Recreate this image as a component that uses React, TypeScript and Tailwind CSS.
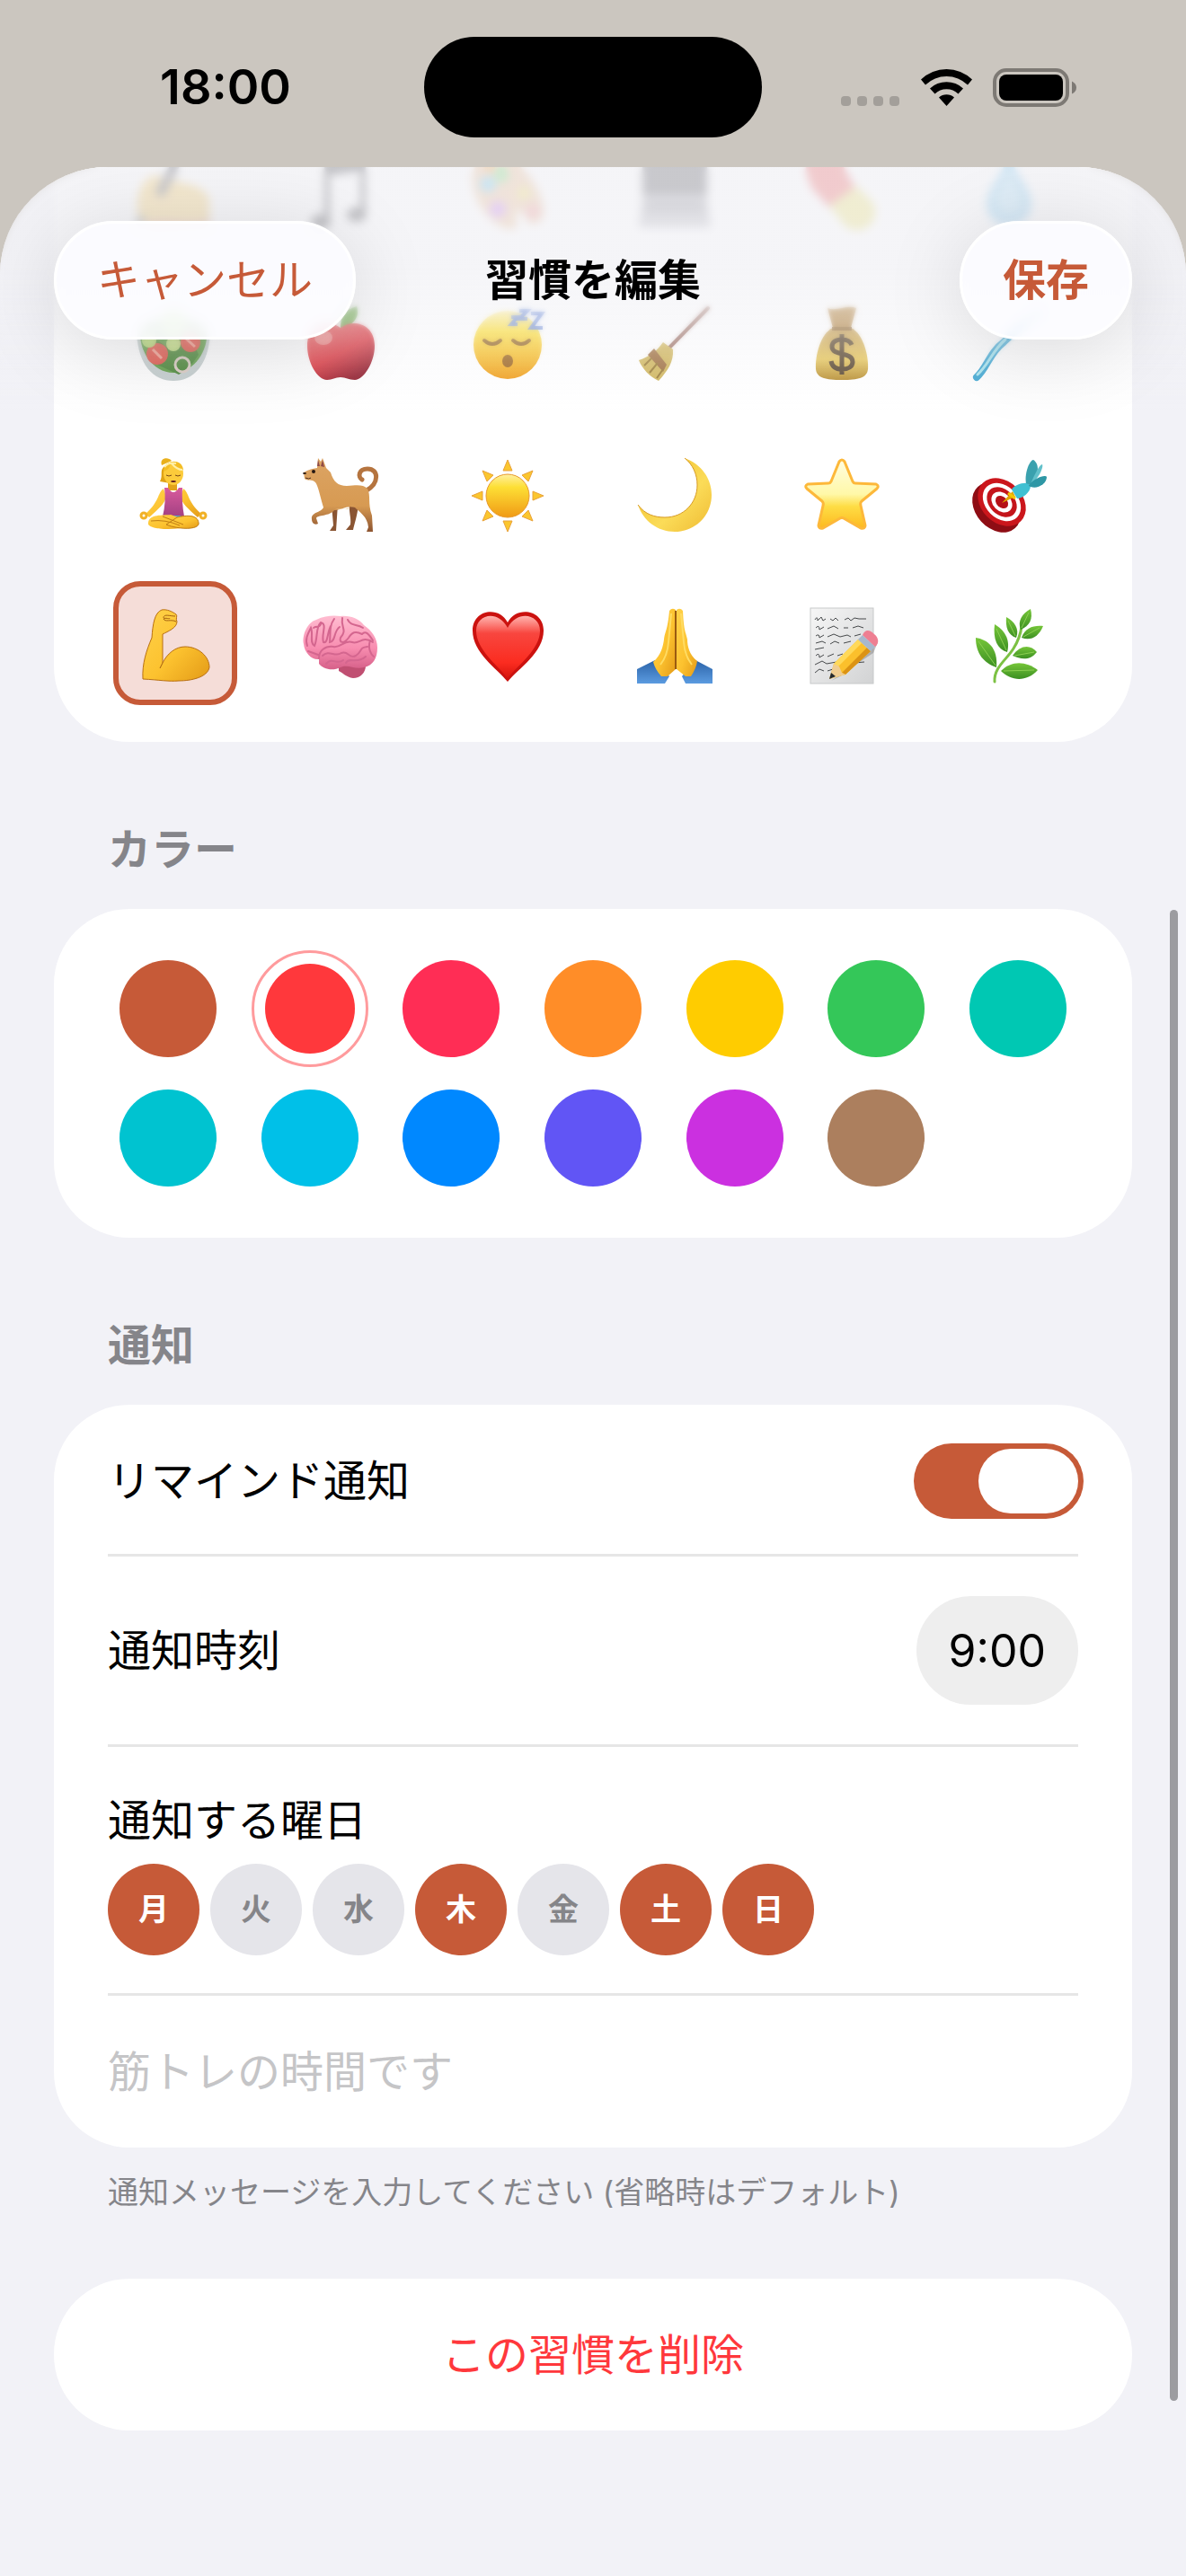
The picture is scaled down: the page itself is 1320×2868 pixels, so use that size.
import { useState } from 'react';
import type { ReactNode } from 'react';

interface Emoji {
  label: string;
  art: ReactNode;
}

// Gradients shared by the emoji drawings
function EmojiDefs() {
  return (
    <svg className="absolute h-0 w-0" aria-hidden="true">
      <defs>
        <linearGradient id="skin" x1="0" y1="0" x2="1" y2="1">
          <stop offset="0" stopColor="#ffd24a" />
          <stop offset="0.55" stopColor="#fcc22f" />
          <stop offset="1" stopColor="#e39a17" />
        </linearGradient>
        <linearGradient id="sun" x1="0" y1="0" x2="0" y2="1">
          <stop offset="0" stopColor="#fff0a0" />
          <stop offset="0.3" stopColor="#fddf35" />
          <stop offset="1" stopColor="#f09a15" />
        </linearGradient>
        <linearGradient id="moon" x1="0" y1="0" x2="1" y2="1">
          <stop offset="0" stopColor="#efb823" />
          <stop offset="0.6" stopColor="#fbdc58" />
          <stop offset="1" stopColor="#efbb33" />
        </linearGradient>
        <linearGradient id="starFill" x1="0" y1="0" x2="0" y2="1">
          <stop offset="0" stopColor="#fffde0" />
          <stop offset="0.5" stopColor="#fff8a8" />
          <stop offset="0.68" stopColor="#fedd45" />
          <stop offset="1" stopColor="#fdb91f" />
        </linearGradient>
        <linearGradient id="heart" x1="0" y1="0" x2="0" y2="1">
          <stop offset="0" stopColor="#ffb5b0" />
          <stop offset="0.28" stopColor="#f8463f" />
          <stop offset="0.75" stopColor="#fb2c20" />
          <stop offset="1" stopColor="#d8150d" />
        </linearGradient>
        <linearGradient id="fur" x1="0" y1="0" x2="0" y2="1">
          <stop offset="0" stopColor="#dca464" />
          <stop offset="0.65" stopColor="#d79a52" />
          <stop offset="1" stopColor="#8d5430" />
        </linearGradient>
        <linearGradient id="top" x1="0" y1="0" x2="0" y2="1">
          <stop offset="0" stopColor="#d95a9c" />
          <stop offset="1" stopColor="#a34183" />
        </linearGradient>
        <linearGradient id="brain" x1="0" y1="0" x2="0" y2="1">
          <stop offset="0" stopColor="#ffbdd1" />
          <stop offset="0.6" stopColor="#f88db0" />
          <stop offset="1" stopColor="#d66089" />
        </linearGradient>
        <linearGradient id="leaf" x1="0" y1="0" x2="0" y2="1">
          <stop offset="0" stopColor="#76c639" />
          <stop offset="1" stopColor="#3b8f22" />
        </linearGradient>
        <linearGradient id="apple" x1="0" y1="0" x2="0.6" y2="1">
          <stop offset="0" stopColor="#f2605f" />
          <stop offset="0.6" stopColor="#dc2f38" />
          <stop offset="1" stopColor="#8f1525" />
        </linearGradient>
        <linearGradient id="bag" x1="0" y1="0" x2="0" y2="1">
          <stop offset="0" stopColor="#c29a50" />
          <stop offset="0.6" stopColor="#e5c456" />
          <stop offset="1" stopColor="#b58a2c" />
        </linearGradient>
        <linearGradient id="sleeve" x1="0" y1="0" x2="0" y2="1">
          <stop offset="0" stopColor="#2b63a8" />
          <stop offset="1" stopColor="#5b9be0" />
        </linearGradient>
        <linearGradient id="paper" x1="0" y1="0" x2="1" y2="1">
          <stop offset="0" stopColor="#f6f6f6" />
          <stop offset="1" stopColor="#d2d3d4" />
        </linearGradient>
      </defs>
    </svg>
  );
}

const EMOJIS: Emoji[] = [
  {
    label: '書く',
    art: (
      <>
        <path d="M2 60C2 38 8 26 22 22L50 30C72 34 82 42 82 52V76L20 78C8 76 2 72 2 60Z" fill="#f7c95c" />
        <path d="M10 76C30 66 60 80 82 70V80L12 82Z" fill="#e08d6a" />
        <path d="M50 0L26 44" stroke="#4a4a50" strokeWidth="10" fill="none" />
        <path d="M8 68L2 80" stroke="#4a4a50" strokeWidth="6" fill="none" />
      </>
    ),
  },
  {
    label: '音楽',
    art: (
      <>
        <path d="M24 6L70 -2V66H64V18L30 22V76H24Z" fill="#3a3a3e" />
        <ellipse cx="20" cy="74" rx="11" ry="8" fill="#3a3a3e" />
        <ellipse cx="60" cy="66" rx="11" ry="8" fill="#3a3a3e" />
      </>
    ),
  },
  {
    label: '絵',
    art: (
      <>
        <path d="M6 12C20 -6 52 2 68 26C86 52 86 74 72 76C60 78 62 60 54 62C46 66 60 84 44 82C18 78 -6 36 6 12Z" fill="#e9b98a" />
        <circle cx="20" cy="32" r="9" fill="#58c2ee" />
        <circle cx="35" cy="22" r="8" fill="#61d86a" />
        <circle cx="22" cy="14" r="6" fill="#f19a38" />
        <circle cx="31" cy="60" r="9" fill="#bf6ff0" />
        <circle cx="60" cy="42" r="7" fill="#f0dd50" />
        <circle cx="70" cy="62" r="8" fill="#f08c8c" />
      </>
    ),
  },
  {
    label: 'パソコン',
    art: (
      <>
        <rect x="6" y="0" width="72" height="44" fill="#4f4f55" />
        <path d="M6 44H78L82 80H2Z" fill="#b0b0b7" />
        <path d="M10 48H74L76 64H8Z" fill="#8a8a92" />
      </>
    ),
  },
  {
    label: '薬',
    art: (
      <>
        <path d="M4 24A20 20 0 0 1 40 6L58 38L28 58L8 36Z" fill="#ee5a58" />
        <path d="M58 34L28 56L42 74A20 20 0 0 0 76 52Z" fill="#e9de6a" />
      </>
    ),
  },
  {
    label: '水',
    art: (
      <>
        <path d="M42 0C48 20 67 36 67 54A25 25 0 0 1 17 54C17 36 36 20 42 0Z" fill="#7cc8f2" />
        <path d="M42 14C44 28 56 38 56 50A14 14 0 0 1 28 50C28 38 40 28 42 14Z" fill="#a5dbf5" />
      </>
    ),
  },
  {
    label: 'サラダ',
    art: (
      <>
        <path d="M1 30C3 66 20 83 42 83S81 66 83 30Z" fill="#c3cdcd" />
        <path d="M5 26C16 8 68 6 79 28C81 48 66 74 42 74S3 48 5 26Z" fill="#55983a" />
        <path d="M16 40C26 30 34 54 44 46S64 36 70 54L60 68L48 76L22 64Z" fill="#3f7f2b" />
        <circle cx="42" cy="18" r="14" fill="#8ddc3e" />
        <circle cx="24" cy="53" r="12" fill="#e04b3e" />
        <circle cx="61" cy="40" r="11" fill="#e04b3e" />
        <circle cx="42" cy="42" r="8" fill="#c0dc7b" />
        <circle cx="15" cy="38" r="8" fill="#b2d86e" />
        <path d="M19 48L29 58M56 36L66 45" stroke="#f3a08e" strokeWidth="3" />
        <circle cx="52" cy="65" r="8" fill="none" stroke="#d9c9c0" strokeWidth="3" />
      </>
    ),
  },
  {
    label: 'りんご',
    art: (
      <>
        <path d="M42 24C42 12 46 4 60 0C64 12 56 22 42 24Z" fill="#6fae4a" />
        <path d="M42 24C54 14 80 18 80 44C80 62 68 82 58 82C51 82 48 79 42 79S33 82 27 82C16 82 5 62 5 44C5 18 30 14 42 24Z" fill="url(#apple)" />
        <ellipse cx="23" cy="35" rx="10" ry="8" fill="#f7a09b" opacity="0.7" />
      </>
    ),
  },
  {
    label: '睡眠',
    art: (
      <>
        <circle cx="42" cy="43" r="38" fill="url(#sun)" />
        <path d="M16 38Q25 46 34 38M48 38Q57 46 66 38" stroke="#8a5a1c" strokeWidth="4" fill="none" strokeLinecap="round" />
        <ellipse cx="42" cy="61" rx="6" ry="7" fill="#9a611a" />
        <path d="M46 12H53L46 20H53M55 5H64L55 14H64M68 8H80L68 24H81" stroke="#6c8cd8" strokeWidth="4" fill="none" />
      </>
    ),
  },
  {
    label: '掃除',
    art: (
      <>
        <path d="M79 2L36 46" stroke="#95665a" strokeWidth="4" strokeLinecap="round" />
        <path d="M29 40L40 48C41 62 34 72 24 83C14 78 6 70 2 60C14 56 22 50 29 40Z" fill="#cfb458" />
        <path d="M19 47L33 65L29 73L12 54Z" fill="#9c6b3a" />
        <path d="M8 66L16 58M14 74L23 63M22 80L29 70" stroke="#96762e" strokeWidth="2" />
      </>
    ),
  },
  {
    label: '貯金',
    art: (
      <>
        <path d="M26 2C36 6 48 -2 58 2L52 24H32Z" fill="#b88c4b" />
        <path d="M32 24H52C66 30 72 56 71 70C70 80 60 82 42 82S14 80 13 70C12 56 18 30 32 24Z" fill="url(#bag)" />
        <path d="M31 25H53" stroke="#8f6730" strokeWidth="4" />
        <path d="M53 43C51 38 47 37 42 37C35 37 31 40 31 45C31 56 54 50 54 62C54 67 49 70 42 70C35 70 31 67 30 61M42 31V76" stroke="#54412a" strokeWidth="5" fill="none" />
      </>
    ),
  },
  {
    label: '歯みがき',
    art: (
      <>
        <path d="M6 79C18 68 20 52 36 40C46 30 58 20 74 8" stroke="#38a5d2" strokeWidth="8" fill="none" strokeLinecap="round" />
        <path d="M7 76C20 64 23 50 38 37" stroke="#a4e4ef" strokeWidth="3" fill="none" strokeLinecap="round" />
        <path d="M58 14L72 2L76 8L62 20Z" fill="#b9e6f5" />
      </>
    ),
  },
  {
    label: 'ヨガ',
    art: (
      <>
        <path d="M29 9C26 1 36 -1 40 4Z" fill="#e9b01c" />
        <path d="M32 10C26 15 31 20 27 27L38 29Z" fill="#e0a315" />
        <path d="M36 26H46V37H36Z" fill="#e2a31a" />
        <path d="M31 35C24 40 27 49 11 63L15 67C27 56 32 52 34 44ZM53 35C60 40 57 49 73 63L69 67C57 56 52 52 50 44Z" fill="url(#skin)" />
        <path d="M32 34H36Q42 44 48 34H52Q51 49 54 66H30Q34 50 32 34Z" fill="url(#top)" />
        <path d="M34 65H50V77H34Z" fill="#4fa0d0" />
        <path d="M14 73C15 63 30 65 39 64C50 68 64 73 60 77C43 82 12 81 14 73Z" fill="url(#skin)" />
        <path d="M70 73C69 63 54 65 46 67L34 75C48 81 72 81 70 73Z" fill="url(#skin)" stroke="#bf7d14" strokeWidth="1" />
        <path d="M17 71Q33 69 49 76M30 66L53 75" stroke="#bf7d14" strokeWidth="1" fill="none" />
        <ellipse cx="42" cy="18" rx="11" ry="13" fill="#fccb3b" />
        <path d="M31 16C31 2 52 1 53 14C46 13 42 10 39 7C38 13 34 15 31 16Z" fill="#f4bd25" />
        <path d="M32 11Q37 5 45 7M40 7Q46 14 52 14" stroke="#fff0a8" strokeWidth="2" fill="none" />
        <path d="M34 20Q37 22 40 20M44 20Q47 22 50 20" stroke="#7a4a16" strokeWidth="1" fill="none" />
        <ellipse cx="42" cy="27" rx="3" ry="1" fill="#5b1820" />
        <circle cx="9" cy="65" r="3" fill="none" stroke="#f1b125" strokeWidth="3" />
        <circle cx="75" cy="65" r="3" fill="none" stroke="#f1b125" strokeWidth="3" />
      </>
    ),
  },
  {
    label: '犬の散歩',
    art: (
      <>
        <path d="M32 52H39L37 82H30L34 76ZM52 52H62C61 64 57 76 56 81H48L53 75C54 67 51 61 52 52Z" fill="#8a5533" />
        <path d="M71 37C85 29 85 13 72 13C62 13 61 22 66 25" fill="none" stroke="#b5743f" strokeWidth="5" strokeLinecap="round" />
        <path d="M16 12L17 1L20 5L22 1L26 12L31 17C34 27 39 32 49 32C60 31 67 30 72 35C76 43 72 51 77 65L78 83H71L73 78C72 66 63 61 58 56C50 53 42 59 35 59C30 66 16 64 15 68L17 74C13 76 10 73 10 69C9 61 20 62 23 56C20 47 17 31 14 28C10 24 5 27 2 24L1 17C5 15 8 13 16 12Z" fill="url(#fur)" />
        <path d="M16 10L17 3L19 10ZM20 10L22 3L24 11Z" fill="#8f4b48" />
        <path d="M36 57Q50 60 57 53L50 58Z" fill="#f0cf9c" />
        <circle cx="12" cy="16" r="2" fill="#261813" />
        <ellipse cx="2" cy="18" rx="2" ry="1" fill="#261813" />
        <path d="M3 23Q7 25 9 23" stroke="#4c2c20" strokeWidth="1" fill="none" />
      </>
    ),
  },
  {
    label: '朝',
    art: (
      <>
        <circle cx="42" cy="43" r="24" fill="url(#sun)" stroke="#e89a2c" strokeWidth="1" />
        <g fill="#fbc62e" stroke="#e9a23a" strokeWidth="1">
          <path d="M42 3L47 15H37Z" />
          <path d="M42 83L37 71H47Z" />
          <path d="M2 43L14 38V48Z" />
          <path d="M82 43L70 48V38Z" />
          <path d="M14 15L26 20L19 27Z" />
          <path d="M70 15L65 27L58 20Z" />
          <path d="M14 71L19 59L26 66Z" />
          <path d="M70 71L58 66L65 59Z" />
        </g>
      </>
    ),
  },
  {
    label: '夜',
    art: (
      <>
        <path d="M53 1C72 8 83 24 83 42C83 65 65 83 42 83C23 83 7 71 1 53C9 64 20 67 31 67C52 67 67 51 67 31C67 19 62 8 53 1Z" fill="url(#moon)" />
        <path d="M53 1C62 8 67 19 67 31C67 51 52 67 31 67C20 67 9 64 1 53" fill="none" stroke="#d79b25" strokeWidth="1" />
      </>
    ),
  },
  {
    label: '星',
    art: (
      <path
        d="M39 5Q42 1 45 5L54 27Q55 29 57 29L80 30Q84 32 81 35L64 49Q62 51 63 54L68 76Q68 80 63 79L44 68Q42 67 40 68L21 79Q16 80 16 76L21 54Q22 51 20 49L3 35Q0 32 4 30L27 29Q29 29 30 27Z"
        fill="url(#starFill)"
        stroke="#fdb83a"
        strokeWidth="3"
        strokeLinejoin="round"
      />
    ),
  },
  {
    label: '目標',
    art: (
      <>
        <ellipse cx="28" cy="56" rx="23" ry="31" transform="rotate(-42 28 56)" fill="#8e0d14" />
        <g transform="rotate(45 34 50)">
          <ellipse cx="34" cy="50" rx="30" ry="23" fill="#cb161c" />
          <ellipse cx="34" cy="50" rx="24" ry="18" fill="#ffffff" />
          <ellipse cx="34" cy="50" rx="19" ry="14" fill="#c4151b" />
          <ellipse cx="34" cy="50" rx="13" ry="10" fill="#ffffff" />
          <ellipse cx="34" cy="50" rx="8" ry="6" fill="#b51218" />
        </g>
        <path d="M34 51L46 38L49 44Z" fill="#e0a400" />
        <path d="M41 40L49 46" stroke="#f3c600" strokeWidth="3" />
        <path d="M45 36C47 32 56 28 63 29L66 32C66 39 57 46 51 46Z" fill="#3fc0d2" />
        <path d="M61 29C59 20 64 4 69 3C76 7 76 20 66 31Z" fill="#3aa1ae" />
        <path d="M66 30C70 20 76 8 79 8C81 12 73 26 66 31Z" fill="#63c1cb" />
        <path d="M64 31C71 23 82 19 84 22C84 30 72 37 64 32Z" fill="#2e97a5" />
      </>
    ),
  },
  {
    label: '筋トレ',
    art: (
      <>
        <path d="M8 79C7 62 12 47 18 33C19 18 21 5 29 2C35 1 41 4 45 7C47 9 44 12 46 15C46 22 36 26 30 29V61C35 51 44 43 55 43C70 43 82 54 82 66C80 77 62 81 48 81C36 82 27 80 8 79Z" fill="url(#skin)" stroke="#b86f12" strokeWidth="1" />
        <path d="M30 61L27 67M31 11C31 6 38 9 44 9M31 12C33 16 39 12 45 15M31 12C33 10 38 13 38 11" stroke="#a35f10" strokeWidth="1" fill="none" />
      </>
    ),
  },
  {
    label: '脳トレ',
    art: (
      <>
        <path d="M40 66C45 60 60 62 70 64C70 72 64 78 56 78C48 77 45 72 40 70Z" fill="#c04f72" />
        <path d="M1 40C-1 30 5 16 15 13C25 8 35 8 42 9C53 8 63 12 68 19C77 25 83 34 83 44C83 56 78 64 68 66C58 69 50 62 42 66C32 71 22 67 18 62L18 57C10 58 2 50 1 40Z" fill="url(#brain)" />
        <path d="M5 42C2 35 6 28 9 22C12 29 7 38 13 42C17 33 14 22 20 16C28 18 20 29 23 38C28 40 27 28 31 20M35 12C29 20 31 29 30 38C37 37 34 26 41 21M44 11C42 22 50 24 42 33C40 39 46 40 51 33C55 27 58 25 66 29M50 13C54 21 60 17 67 22M18 56C18 47 25 42 34 43C42 45 46 35 55 38C63 41 66 30 78 38M22 53C29 46 36 55 43 50C51 47 51 57 59 53C67 48 62 44 72 43M26 62C33 54 38 64 45 58M48 61C52 54 60 63 70 54M6 48L17 52M75 36C72 45 76 52 79 54M12 22C16 19 18 23 20 18M66 29C70 24 74 30 78 36" stroke="#d4668f" strokeWidth="2" fill="none" strokeLinecap="round" />
      </>
    ),
  },
  {
    label: '健康',
    art: (
      <>
        <path d="M42 82C30 67 3 50 3 25C3 2 32 -3 42 16C52 -3 82 2 82 25C82 50 54 67 42 82Z" fill="#cb120f" />
        <path d="M42 78C30 63 7 46 7 25C7 7 31 1 42 22C53 1 78 7 78 25C78 46 54 63 42 78Z" fill="url(#heart)" />
      </>
    ),
  },
  {
    label: '感謝',
    art: (
      <>
        <path d="M0 68L20 58L36 76L31 84H0ZM84 68L65 58L50 76L54 84H84Z" fill="url(#sleeve)" />
        <path d="M36 3Q39 -1 43 2L43 68L34 76L27 76Q20 68 18 60C27 52 29 42 30 35C31 26 34 25 36 3Z" fill="url(#skin)" />
        <path d="M51 3Q48 -1 44 2V68L54 76L60 76Q66 67 67 59C58 52 56 42 56 35C54 26 52 25 51 3Z" fill="url(#skin)" />
        <path d="M43 3V68" stroke="#9a5b10" strokeWidth="2" />
        <path d="M38 6L35 38C34 51 30 58 26 63M49 6L52 38C53 51 57 58 61 63" stroke="#ffdc63" strokeWidth="2" fill="none" />
      </>
    ),
  },
  {
    label: '日記',
    art: (
      <>
        <rect x="7" y="0" width="70" height="84" fill="url(#paper)" stroke="#c7c9ca" strokeWidth="1" />
        <path d="M12 13Q15 8 15 14L19 10L21 14L24 12M29 12L32 14L35 11L38 14M45 13L49 11L52 14L56 11L61 12L69 12M13 22Q17 18 17 24L22 21M26 23L33 20L38 23M44 22L49 22M54 22L60 20L66 22M13 31Q17 28 17 33L22 30M26 32L33 29L40 32L48 30L52 32M56 31L63 29M13 39L20 37L24 39M29 40L34 37L39 39M44 39L52 37M12 46L22 44M13 53Q17 49 17 55L22 52M26 54L33 51M37 53L43 51M12 63L20 59L25 62L36 60M12 72L17 68L22 70M26 70L32 68M56 61L67 60" stroke="#46494b" strokeWidth="1" fill="none" />
        <path d="M30 81L77 50L82 38L40 76Z" fill="#777777" opacity="0.45" />
        <path d="M28 79L33 62L60 35L74 48L46 74Z" fill="#fbc02c" />
        <path d="M33 62L60 35L64 39L37 66Z" fill="#ffd95a" />
        <path d="M42 72L70 44L74 48L46 74Z" fill="#db9314" />
        <path d="M28 79L33 62L39 65L42 72L46 74Z" fill="#f0cd91" />
        <path d="M28 79L30 72L35 76Z" fill="#252a2e" />
        <path d="M60 35L65 30L79 43L74 48Z" fill="#a7b8cc" />
        <path d="M65 30C68 23 73 24 78 29C83 33 84 39 79 43Z" fill="#ee7f92" />
      </>
    ),
  },
  {
    label: '植物',
    art: (
      <>
        <path d="M26 82C25 66 39 58 47 45C52 37 55 30 56 20" stroke="#7cc143" strokeWidth="3" fill="none" strokeLinecap="round" />
        <g fill="url(#leaf)">
          <path d="M5 33C18 35 30 44 28 66C14 61 5 51 5 33Z" />
          <path d="M26 18C36 24 44 34 40 49C29 46 24 35 26 18Z" />
          <path d="M39 10C48 15 54 23 50 33C41 30 38 22 39 10Z" />
          <path d="M66 1C69 12 65 20 55 24C51 14 57 6 66 1Z" />
          <path d="M80 20C75 32 66 37 56 33C60 22 69 19 80 20Z" />
          <path d="M73 49C65 59 55 57 46 53C54 41 66 40 73 49Z" />
          <path d="M74 69C61 83 44 81 33 70C45 58 61 59 74 69Z" />
        </g>
        <path d="M8 37L27 64M28 23L39 47M41 14L49 31M64 5L56 22M76 22L58 32M70 49L48 53M70 69L36 70" stroke="#8ccf52" strokeWidth="1" />
      </>
    ),
  },
];

const COLORS = [
  { name: 'テラコッタ', bg: 'bg-[#c65a38]' },
  { name: 'レッド', bg: 'bg-[#ff383c]' },
  { name: 'ピンク', bg: 'bg-[#ff2d55]' },
  { name: 'オレンジ', bg: 'bg-[#ff8d28]' },
  { name: 'イエロー', bg: 'bg-[#ffcc00]' },
  { name: 'グリーン', bg: 'bg-[#34c759]' },
  { name: 'ミント', bg: 'bg-[#00c8b3]' },
  { name: 'ティール', bg: 'bg-[#00c3d0]' },
  { name: 'シアン', bg: 'bg-[#00c0e8]' },
  { name: 'ブルー', bg: 'bg-[#0088ff]' },
  { name: 'インディゴ', bg: 'bg-[#6155f5]' },
  { name: 'パープル', bg: 'bg-[#cb30e0]' },
  { name: 'ブラウン', bg: 'bg-[#ac7f5e]' },
];

const DAYS = ['月', '火', '水', '木', '金', '土', '日'];

function StatusBar() {
  return (
    <div className="grid grid-cols-[1fr_376px_1fr] items-center pt-[41px] pb-[33px]">
      <div className="pl-[30px] text-center text-[54px] leading-[60px] font-semibold">18:00</div>
      <div className="h-28 rounded-full bg-black" />
      <div className="flex items-center justify-end gap-[23px] pr-[121px]">
        <svg width="66" height="43" viewBox="0 0 66 43" fill="#a39f9a" aria-hidden="true">
          <rect x="0" y="31" width="11" height="11" rx="4" />
          <rect x="18" y="31" width="11" height="11" rx="4" />
          <rect x="36" y="31" width="11" height="11" rx="4" />
          <rect x="54" y="31" width="11" height="11" rx="4" />
        </svg>
        <svg width="57" height="43" viewBox="0 0 57 43" aria-hidden="true">
          <path d="M0 12.500A41 41 0 0 1 57 12.500L52 18.500A34 34 0 0 0 5 18.500Z" />
          <path d="M10 22.500A27 27 0 0 1 47 22.500L41.500 28.500A19 19 0 0 0 15.500 28.500Z" />
          <path d="M20 32.500A13 13 0 0 1 37 32.500L28.500 42Z" />
        </svg>
        <svg width="94" height="43" viewBox="0 0 94 43" aria-hidden="true">
          <rect x="2" y="2" width="81" height="39" rx="13" fill="none" stroke="#7d7974" strokeWidth="4" />
          <rect x="7" y="7" width="71" height="29" rx="8" />
          <path d="M88 14.500Q93 17 93 21.500T88 28.500Z" fill="#7d7974" />
        </svg>
      </div>
    </div>
  );
}

function SectionTitle({ children }: { children: ReactNode }) {
  return <h2 className="mt-[90px] mb-9 px-[60px] text-5xl leading-[60px] font-semibold text-[#85858a]">{children}</h2>;
}

export default function App() {
  const [icon, setIcon] = useState(18);
  const [color, setColor] = useState(1);
  const [remind, setRemind] = useState(true);
  const [days, setDays] = useState([0, 3, 5, 6]);
  const [message, setMessage] = useState('');

  const toggleDay = (day: number) => {
    setDays(days.includes(day) ? days.filter((d) => d !== day) : [...days, day]);
  };

  return (
    <div lang="ja" className="flex min-h-screen flex-col bg-[#cbc6bf] font-['Inter','Noto_Sans_CJK_JP',sans-serif] text-black">
      <EmojiDefs />
      <StatusBar />

      <main className="relative flex-1 overflow-hidden rounded-t-[120px] bg-[#f2f2f7] px-[60px] pb-40">
        {/* Icon picker, scrolled partly under the header */}
        <section className="-mt-[43px] grid grid-cols-6 justify-items-center gap-y-[30px] rounded-b-[84px] bg-white px-[42px] pb-[41px]">
          {EMOJIS.map((emoji, i) => (
            <button
              key={emoji.label}
              type="button"
              aria-label={emoji.label}
              aria-pressed={icon === i}
              onClick={() => setIcon(i)}
              className={`flex size-[138px] items-center justify-center rounded-[30px] border-[6px] pt-[6px] pr-1 ${
                icon === i ? 'border-[#c65a38] bg-[#f5ddd8]' : 'border-transparent'
              }`}
            >
              <svg width="84" height="84" viewBox="0 0 84 84" className="overflow-visible">
                {emoji.art}
              </svg>
            </button>
          ))}
        </section>

        <SectionTitle>カラー</SectionTitle>
        <section className="grid grid-cols-7 justify-items-center gap-y-9 rounded-[84px] bg-white px-12 py-[57px]">
          {COLORS.map((c, i) => (
            <button
              key={c.name}
              type="button"
              aria-label={c.name}
              aria-pressed={color === i}
              onClick={() => setColor(i)}
              className="relative flex size-[108px] items-center justify-center rounded-full"
            >
              <span className={`rounded-full ${c.bg} ${color === i ? 'size-[100px]' : 'size-[108px]'}`} />
              {color === i && <span className="absolute -inset-[11px] rounded-full border-[3px] border-[#ff9b9d]" />}
            </button>
          ))}
        </section>

        <SectionTitle>通知</SectionTitle>
        <section className="rounded-[84px] bg-white px-[60px] text-5xl leading-[60px]">
          <div className="flex h-[169px] items-center justify-between border-b-[3px] border-[#e6e6e6] pt-1">
            <label htmlFor="remind">リマインド通知</label>
            <input
              id="remind"
              type="checkbox"
              role="switch"
              checked={remind}
              onChange={(e) => setRemind(e.target.checked)}
              className="-mr-[6px] flex h-[84px] w-[189px] appearance-none items-center rounded-full bg-[#e5e5ea] px-[6px] before:h-[72px] before:w-[111px] before:rounded-full before:bg-white checked:justify-end checked:bg-[#c65a38]"
            />
          </div>
          <div className="flex h-[212px] items-center justify-between border-b-[3px] border-[#e6e6e6]">
            <span id="time-label">通知時刻</span>
            <button type="button" aria-describedby="time-label" className="h-[121px] rounded-full bg-[#eeeeee] px-9 text-[50px]">
              9:00
            </button>
          </div>
          <div className="border-b-[3px] border-[#e6e6e6] pt-[52px] pb-[42px]">
            <p className="mb-[18px]">通知する曜日</p>
            <div className="flex gap-3">
              {DAYS.map((day, i) => (
                <button
                  key={day}
                  type="button"
                  aria-pressed={days.includes(i)}
                  onClick={() => toggleDay(i)}
                  className={`size-[102px] rounded-full text-[34px] font-semibold ${
                    days.includes(i) ? 'bg-[#c65a38] text-white' : 'bg-[#e5e5ea] text-[#858589]'
                  }`}
                >
                  {day}
                </button>
              ))}
            </div>
          </div>
          <input
            type="text"
            aria-label="通知メッセージ"
            value={message}
            onChange={(e) => setMessage(e.target.value)}
            placeholder="筋トレの時間です"
            className="h-[169px] w-full outline-none placeholder:text-[#c5c5c7]"
          />
        </section>
        <p className="mt-7 px-[60px] text-[34px] leading-[44px] text-[#85858a]">
          通知メッセージを入力してください (省略時はデフォルト)
        </p>

        <button type="button" className="mt-[74px] h-[169px] w-full rounded-[84px] bg-white text-5xl text-[#ff383c]">
          この習慣を削除
        </button>

        {/* Blur gets weaker further down the header */}
        <div className="pointer-events-none absolute inset-x-0 top-0 h-[180px] [mask-image:linear-gradient(black_50%,transparent)] backdrop-blur-[5px]" />
        <div className="pointer-events-none absolute inset-x-0 top-0 h-[225px] [mask-image:linear-gradient(black_60%,transparent)] backdrop-blur-[2px]" />
        <div className="pointer-events-none absolute inset-x-0 top-0 h-[270px] bg-linear-to-b from-[#f1f1f5]/75 from-40% to-[#f1f1f5]/0" />

        <header className="absolute inset-x-0 top-[60px] grid grid-cols-[1fr_auto_1fr] items-center px-[60px] text-5xl">
          <button
            type="button"
            className="h-[132px] justify-self-start rounded-full border-[3px] border-white bg-[#fcfcff]/90 px-[45px] text-[#c65a38] shadow-[0_12px_90px_rgba(0,0,0,0.13)] backdrop-blur-[6px]"
          >
            キャンセル
          </button>
          <h1 className="font-semibold">習慣を編集</h1>
          <button
            type="button"
            className="h-[132px] justify-self-end rounded-full border-[3px] border-white bg-[#fcfcff]/90 px-[45px] font-semibold text-[#c65a38] shadow-[0_12px_90px_rgba(0,0,0,0.13)] backdrop-blur-[6px]"
          >
            保存
          </button>
        </header>

        <div className="absolute top-[827px] right-[9px] bottom-[195px] w-[9px] rounded-full bg-[#9c9ca0]" />
      </main>
    </div>
  );
}
